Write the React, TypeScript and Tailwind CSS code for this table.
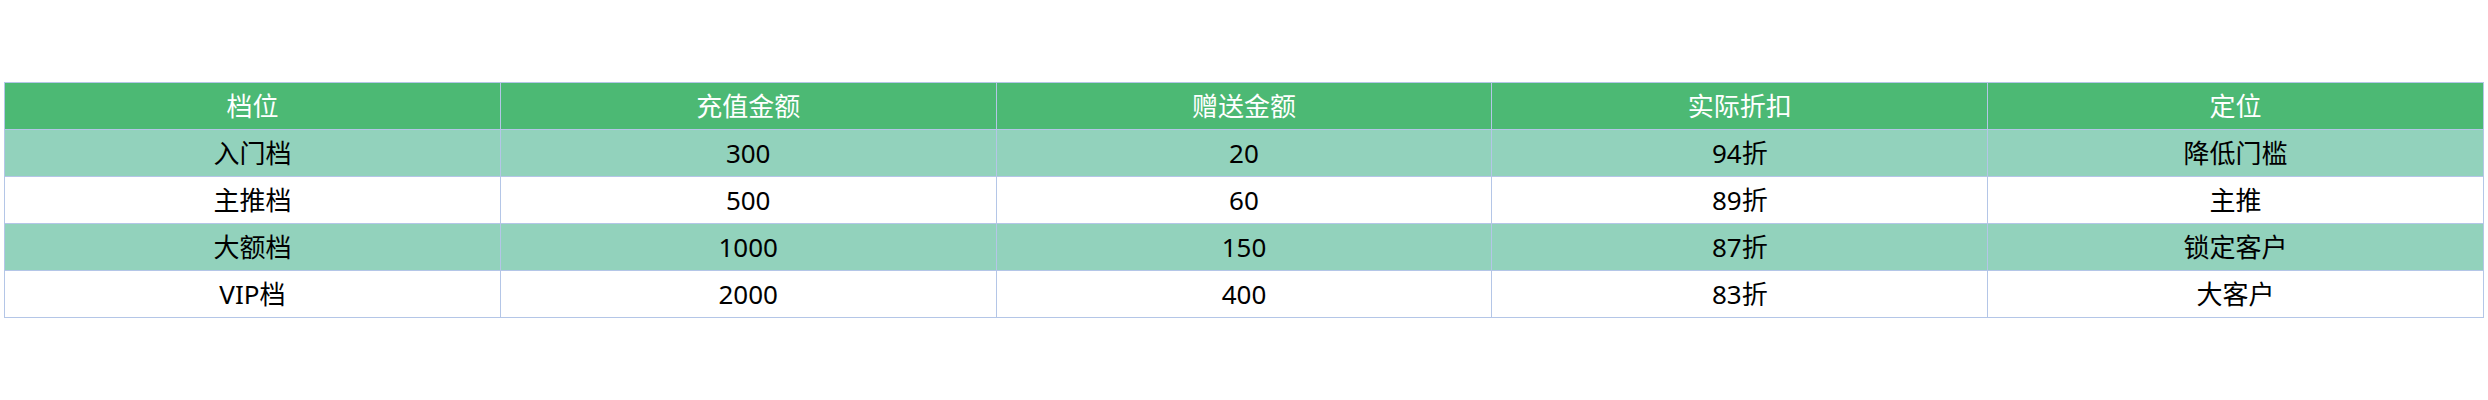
const headers = ['档位', '充值金额', '赠送金额', '实际折扣', '定位'];

const rows = [
  ['入门档', '300', '20', '94折', '降低门槛'],
  ['主推档', '500', '60', '89折', '主推'],
  ['大额档', '1000', '150', '87折', '锁定客户'],
  ['VIP档', '2000', '400', '83折', '大客户'],
];

export default function App() {
  return (
    <div
      className="h-[400px] w-[2488px] bg-white pt-[82px] pl-[4px]"
      style={{ fontFamily: '"Noto Sans", "Noto Sans CJK SC", sans-serif' }}
    >
      <table className="w-[2480px] table-fixed border-collapse text-[26px] leading-none">
        <thead>
          <tr className="h-[47px] bg-[#4cb974] text-white">
            {headers.map((h) => (
              <th key={h} className="border border-[#b4c6e7] text-center font-normal">
                {h}
              </th>
            ))}
          </tr>
        </thead>
        <tbody>
          {rows.map((row, i) => (
            <tr key={row[0]} className={i % 2 === 0 ? 'h-[47px] bg-[#92d2bc]' : 'h-[47px] bg-white'}>
              {row.map((cell, j) => (
                <td key={j} className="border border-[#b4c6e7] text-center text-black">
                  {cell}
                </td>
              ))}
            </tr>
          ))}
        </tbody>
      </table>
    </div>
  );
}
